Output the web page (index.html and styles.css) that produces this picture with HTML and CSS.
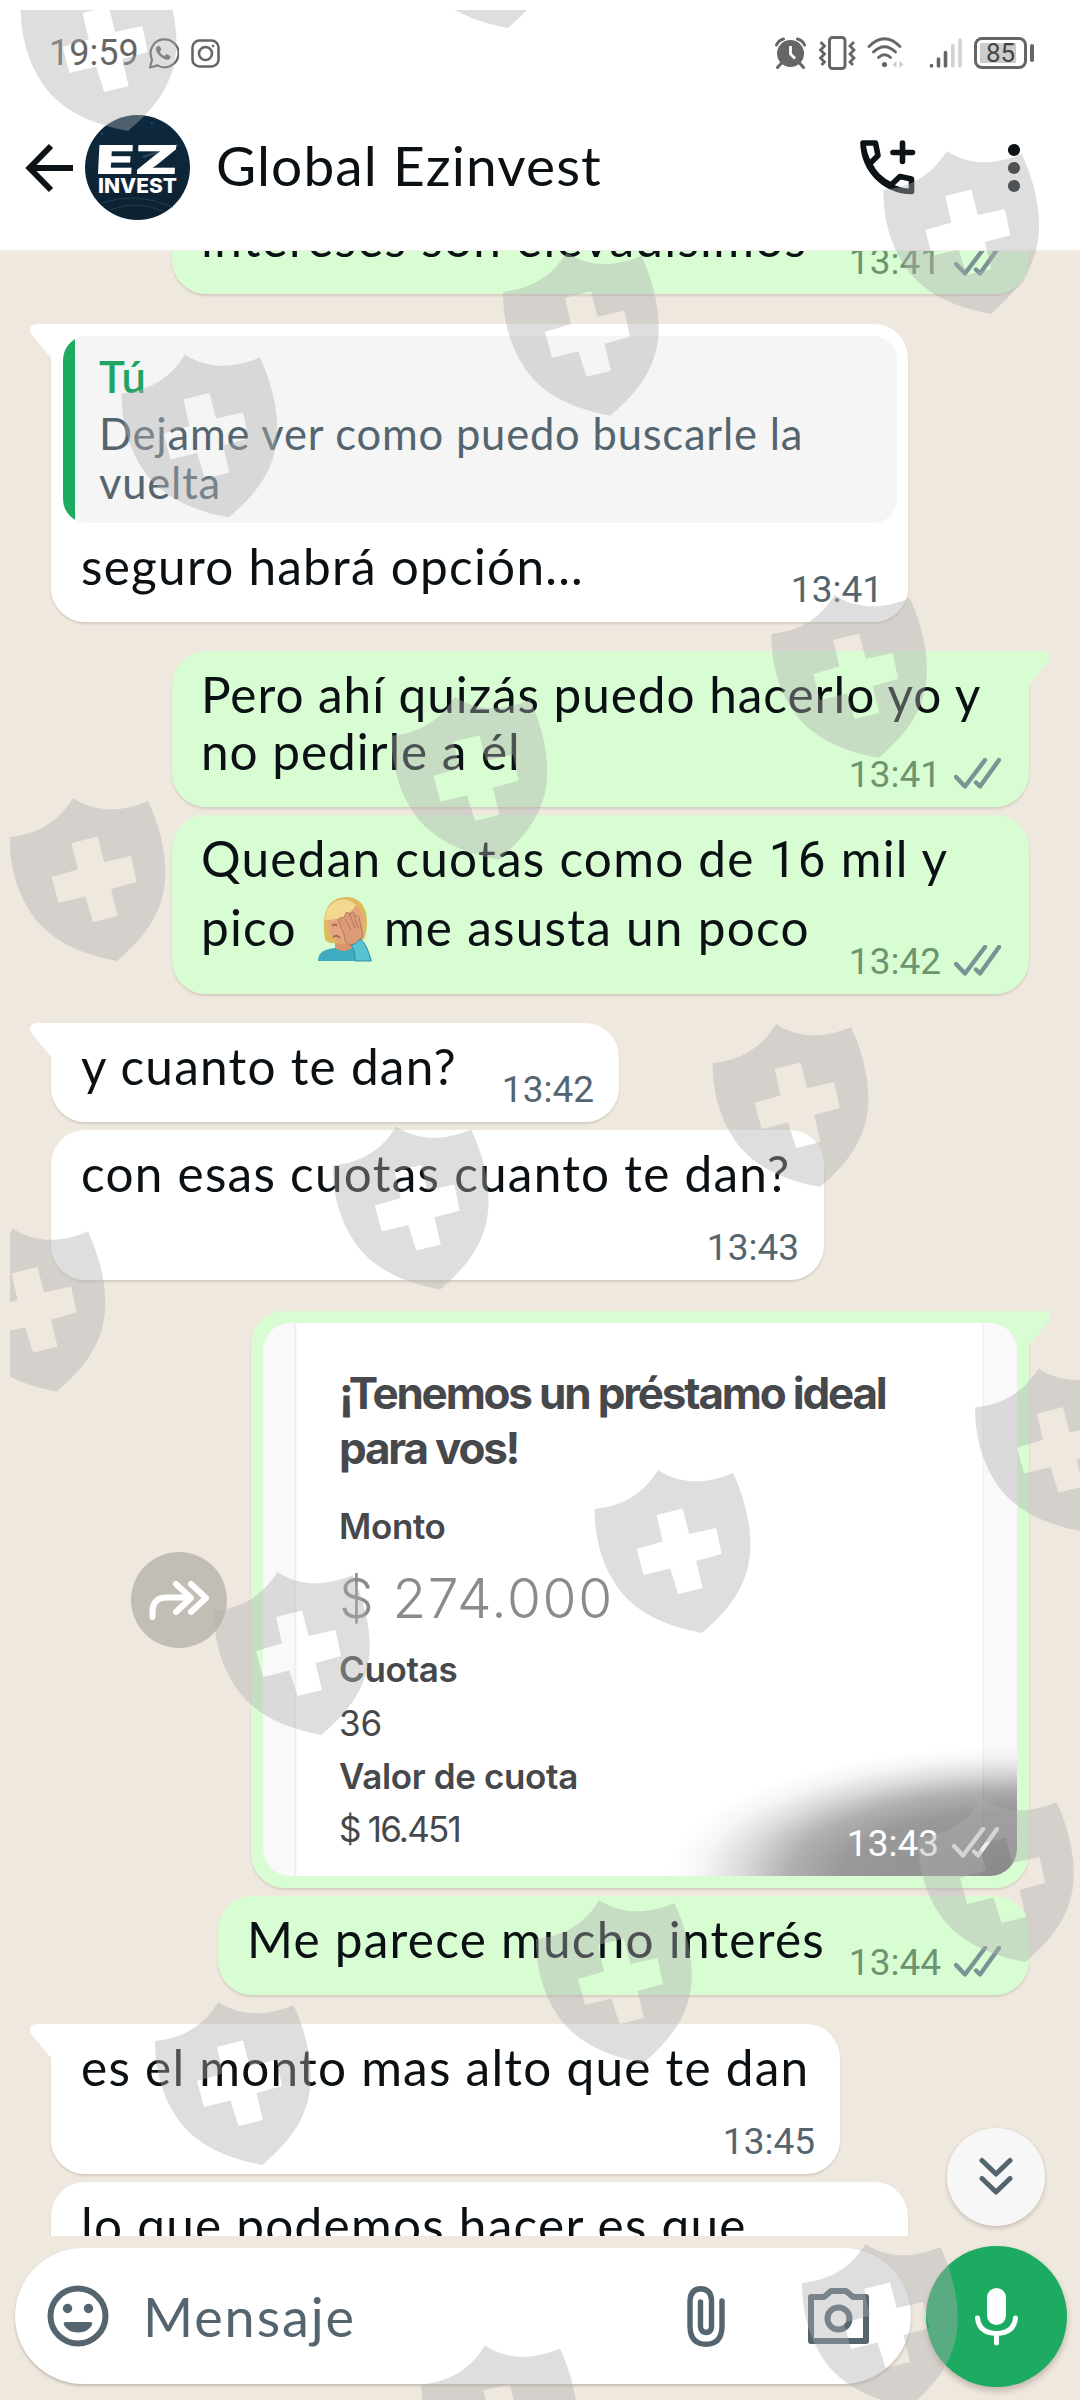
FILE: index.html
```html
<!DOCTYPE html>
<html lang="es">
<head>
<meta charset="utf-8">
<title>Global Ezinvest</title>
<link rel="stylesheet" href="styles.css">
</head>
<body>
<svg class="defs" width="0" height="0" aria-hidden="true">
  <defs>
    <symbol id="ticks" viewBox="0 0 47 31"><path d="M2 19 11 28.500 31 2M22 24.500 26 28.500 45 2" fill="none" stroke="currentColor" stroke-width="4.400" stroke-linecap="round" stroke-linejoin="round"/></symbol>
    <path id="shield" fill-rule="evenodd" d="M0 39C30 36 50 22 63.400 0C85 14 110 15 138.400 3C153 34 160 70 153 98C146 126 128 145 107.400 163C70 156 40 142 22 116C6 92 0 66 0 39ZM62 45 88 38.500 94.500 64 121.500 58 127 84 101.500 91 108 118 83.500 124 75.500 98.500 49 105 42 79 68 71.500Z"/>
  </defs>
</svg>
<div class="phone">
  <header class="header">
    <div class="status">
      <span class="clock">19:59</span>
      <svg class="ic-wa" width="31" height="32" viewBox="0 0 31 32" fill="none" stroke="#666" stroke-width="2.200"><path d="M2 30.500 4 22.500A14 14 0 1 1 9.500 28.400Z" stroke-linejoin="round"/><path d="M9 9.500c-2 2-1 6 3 9.500s8 5 10 2.500l.5-2.500-4-2-2 2c-2-.5-4-2.500-4.700-4.500l1.700-2-1.700-3.500Z" fill="#666" stroke="none"/></svg>
      <svg class="ic-ig" width="29" height="29" viewBox="0 0 29 29" fill="none" stroke="#666" stroke-width="2.600"><rect x="1.500" y="1.500" width="26" height="26" rx="7"/><circle cx="14.500" cy="14.500" r="6.500"/><circle cx="22" cy="7" r="1" fill="#666" stroke-width="1"/></svg>
      <div class="indicators">
        <svg width="31" height="32" viewBox="0 0 31 32"><circle cx="15.500" cy="16.500" r="13.500" fill="#666"/><path d="M1.500 8A10 10 0 0 1 8.500 2M29.500 8A10 10 0 0 0 22.500 2" stroke="#666" stroke-width="3" fill="none" stroke-linecap="round"/><path d="m6.500 26-4 4.500M24.500 26l4 4.500" stroke="#666" stroke-width="3" stroke-linecap="round"/><path d="M15.500 9v8l4.500 4.500" stroke="#fff" stroke-width="2.800" fill="none"/></svg>
        <svg class="g13" width="37" height="34" viewBox="0 0 37 34" fill="none" stroke="#666"><rect x="10.500" y="1.500" width="15.500" height="31" rx="3" stroke-width="3"/><path d="m1.500 6 4 4-4 4 4 4-4 4 4 4-3 3M35 6l-4 4 4 4-4 4 4 4-4 4 3 3" stroke-width="2.800"/></svg>
        <svg class="g11" width="38" height="32" viewBox="0 0 38 32" fill="none" stroke="#666" stroke-width="2.800" stroke-linecap="round"><path d="M2 9.500Q17.500-6 33 9.500M6.500 15Q17.500 4.500 28.500 15M11.500 20.500Q17.500 15 23.500 20.500"/><circle cx="17.500" cy="27.500" r="2.600" fill="#666" stroke="none"/><path d="m29.500 24-4 3.500 4 3.500ZM32.500 24l4 3.500-4 3.500Z" fill="#ccc" stroke="none"/></svg>
        <svg class="g25" width="34" height="32" viewBox="0 0 34 32" stroke-width="3.600" stroke-linecap="round"><path d="M2.500 28.500v.5M9.500 22v7M16.500 15.500V29" stroke="#666"/><path d="M23.800 8.500V29M31 3v26" stroke="#d2d2d2"/></svg>
        <span class="battery"><span class="charge">85</span></span><i class="nub"></i>
      </div>
    </div>
    <div class="appbar">
      <svg class="back" width="50" height="50" viewBox="0 0 50 50" fill="none" stroke="#0c1317" stroke-width="6"><path d="M26 3 4.500 25 26 47M4.500 25H48"/></svg>
      <svg class="avatar" width="105" height="105" viewBox="0 0 105 105"><defs><linearGradient id="av" x1="0" y1="0" x2="0" y2="1"><stop offset="0" stop-color="#0d2a40"/><stop offset="1" stop-color="#0d2130"/></linearGradient></defs><circle cx="52.500" cy="52.500" r="52.500" fill="url(#av)"/><path d="M17 88Q50 76 88 92M25 95Q52 84 80 97" stroke="#263c4b" fill="none"/><path d="M16 19h2M66 8h2M91 30h2M58 42l34-11" stroke="#365369" stroke-width="1.500"/><g fill="#fff" font-family="Inter, sans-serif"><text x="10" y="59" font-size="40" font-weight="900" textLength="83" lengthAdjust="spacingAndGlyphs" transform="translate(3 0) skewX(-3)">EZ</text><text x="13" y="77.500" font-size="20" font-weight="800" textLength="79" lengthAdjust="spacingAndGlyphs">INVEST</text></g></svg>
      <h1 class="title">Global Ezinvest</h1>
      <svg class="call" width="56" height="56" viewBox="0 0 56 56" fill="none" stroke="#0c1317" stroke-width="5.600" stroke-linejoin="round" stroke-linecap="round"><path d="M9.500 24C5 17 3.500 10 3 3H15.500L18 15.500 9.500 24ZM9.500 24C14 34 22 41 31 45L40 36.500 51.500 39V51.500C25 51 4 31 3 3"/><path d="M42.500 3v18.500M33 12.500h19.500"/></svg>
      <svg class="more" width="14" height="50" viewBox="0 0 14 50" fill="#0c1317"><circle cx="7" cy="7" r="6.100"/><circle cx="7" cy="25" r="6.100"/><circle cx="7" cy="43" r="6.100"/></svg>
    </div>
  </header>

  <main class="chat">
    <div class="bubble out first w857"><p class="text">intereses son elevadísimos</p><div class="meta"><time>13:41</time><svg class="ticks"><use href="#ticks"/></svg></div></div>

    <div class="bubble in tail lead reply w857">
      <blockquote class="quote"><b>Tú</b><p>Dejame ver como puedo buscarle la<br>vuelta</p></blockquote>
      <p class="text">seguro habrá opción...</p><div class="meta"><time>13:41</time></div>
    </div>

    <div class="bubble out tail lead w857"><p class="text snug">Pero ahí quizás puedo hacerlo yo y<br>no pedirle a él</p><div class="meta"><time>13:41</time><svg class="ticks"><use href="#ticks"/></svg></div></div>
    <div class="bubble out w857"><p class="text">Quedan cuotas como de <span class="num">16</span> mil y</p><p class="text emoji-line"><span>pico</span><svg class="emoji" width="56" height="66" viewBox="0 0 56 66"><path d="M1 65C1 56 8 53 18 52L34 51C46 53 53 56 55 65Z" fill="#3fabc0"/><path d="M18 43h17v9q-8 6-17 0Z" fill="#d99569"/><path d="M8 43C5 25 6 2 29 1c20 0 24 20 19 40q-3 6-12 7l-22-1q-5-1-6-4Z" fill="#dfb95e"/><path d="M11 23Q30 22 39 10q8 5 7 19c-1 13-9 19-18 19S10 39 11 23Z" fill="#e4a67f"/><path d="M8 24C9 4 27-2 39 9 33 20 22 24 8 24Z" fill="#f4d890"/><path d="M15 30q3-3 5 0M16 41q4-3 7 1" stroke="#a56b4b" stroke-width="2" fill="none"/><path d="M22 27 27 38 28 45Q34 53 41 47 48 42 44 31L42 21Q39 17 38 22L37 17Q34 14 33 19L32 17Q28 15 28 20L26 22Q21 20 22 27Z" fill="#db9b76" stroke="#b97858" stroke-width="1"/><path d="m28 23 6 11M33 19l5 13M38 23l3 9" stroke="#b97858" fill="none"/><path d="M34 49Q39 49 43 43 50 47 54 65H38Q39 55 34 49Z" fill="#59c3d4" stroke="#3091a6" stroke-width="1"/></svg><span>me asusta un poco</span></p><div class="meta"><time>13:42</time><svg class="ticks"><use href="#ticks"/></svg></div></div>

    <div class="bubble in tail lead w568"><p class="text">y cuanto te dan?</p><div class="meta"><time>13:42</time></div></div>
    <div class="bubble in below w773"><p class="text">con esas cuotas cuanto te dan?</p><div class="meta"><time>13:43</time></div></div>

    <div class="media-row">
      <button class="forward" aria-label="Reenviar"><svg width="60" height="40" viewBox="0 0 60 40" fill="none" stroke="#fff" stroke-width="6" stroke-linecap="round" stroke-linejoin="round"><path d="M3.500 37V32Q3.500 17.500 18 17.500H41M27 4 42 18 27 32M42 4 57 18 42 32"/></svg></button>
      <div class="bubble out tail photo-bubble">
        <div class="photo">
          <div class="offer">
            <h2>¡Tenemos un préstamo ideal<br>para vos!</h2>
            <strong class="monto">Monto</strong>
            <span class="amount">$ 274.000</span>
            <strong class="cuotas">Cuotas</strong>
            <span class="count">36</span>
            <strong class="valor">Valor de cuota</strong>
            <span class="fee">$ 16.451</span>
          </div>
          <div class="meta light"><time>13:43</time><svg class="ticks"><use href="#ticks"/></svg></div>
        </div>
      </div>
    </div>
    <div class="bubble out w811"><p class="text">Me parece mucho interés</p><div class="meta"><time>13:44</time><svg class="ticks"><use href="#ticks"/></svg></div></div>

    <div class="bubble in tail lead below w789"><p class="text">es el monto mas alto que te dan</p><div class="meta"><time>13:45</time></div></div>
    <div class="bubble in w857"><p class="text">lo que podemos hacer es que</p><div class="meta"></div></div>
  </main>

  <footer class="composer">
    <div class="field">
      <svg class="smile" width="62" height="62" viewBox="0 0 62 62" fill="none" stroke="#54656f"><circle cx="31" cy="31" r="27.500" stroke-width="6"/><g fill="#54656f" stroke="none"><circle cx="20.500" cy="23.500" r="4.700"/><circle cx="41.500" cy="23.500" r="4.700"/><path d="M19 37H43Q46 37 45 40 41 47.500 31 47.500T17 40Q16 37 19 37Z"/></g></svg>
      <span class="placeholder">Mensaje</span>
      <svg class="clip" width="38" height="61" viewBox="0 0 38 61" fill="none" stroke="#54656f" stroke-width="5.400" stroke-linecap="round"><path d="M35 15V41Q34.500 58 19 58.300 3.500 58 3 41V15Q3.500 3 13.700 2.700 24 3 24.500 14V41Q24 46.500 19 46.500 14 46 13.500 41V16"/></svg>
      <svg class="camera" width="61" height="56" viewBox="0 0 61 56" fill="none" stroke="#54656f" stroke-width="6" stroke-linejoin="round"><path d="M3 9H16L23 3H38L45 9H58V53H3Z"/><circle cx="30.500" cy="30.500" r="11"/></svg>
    </div>
    <button class="mic" aria-label="Grabar"><svg width="43" height="60" viewBox="0 0 43 60" fill="none" stroke="#fff" stroke-width="5" stroke-linecap="round"><rect x="12" y="1" width="19" height="37" rx="9.500" fill="#fff" stroke="none"/><path d="M2.500 31Q4 46 21.500 46.500 39 46 40.500 31M21.500 47v9"/></svg></button>
  </footer>

  <button class="to-end" aria-label="Ir al final"><svg width="34" height="40" viewBox="0 0 34 40" fill="none" stroke="#54656f" stroke-width="5" stroke-linecap="round" stroke-linejoin="round"><path d="m3 3.500 14 13.500L31 3.500M3 21.500 17 35 31 21.500"/></svg></button>

  <svg class="marks" width="1070" height="2390" viewBox="10 10 1070 2390" fill="#b0b0b0" fill-opacity=".41" aria-hidden="true">
    <use href="#shield" x="20.700" y="-32"/><use href="#shield" x="400.500" y="-135"/><use href="#shield" x="883.300" y="151"/>
    <use href="#shield" x="503" y="252.700"/><use href="#shield" x="121.500" y="354.500"/><use href="#shield" x="771.200" y="595"/>
    <use href="#shield" x="391.500" y="696.700"/><use href="#shield" x="9.600" y="798"/><use href="#shield" x="712.600" y="1024"/>
    <use href="#shield" x="332.800" y="1126.500"/><use href="#shield" x="-50.500" y="1228.500"/><use href="#shield" x="594.600" y="1470"/>
    <use href="#shield" x="975" y="1368.500"/><use href="#shield" x="214" y="1572"/><use href="#shield" x="918" y="1799"/>
    <use href="#shield" x="536" y="1900"/><use href="#shield" x="155" y="2002"/><use href="#shield" x="802" y="2244"/>
    <use href="#shield" x="421.500" y="2345.500"/>
  </svg>
</div>
</body>
</html>
```
FILE: styles.css
```css
* { box-sizing: border-box; }
body { margin: 0; }
p, h1, h2, blockquote { margin: 0; }
button { border: 0; padding: 0; display: flex; align-items: center; justify-content: center; border-radius: 50%; }
svg { flex: none; display: block; }
.defs { position: absolute; }

.phone {
  position: relative;
  width: 1080px;
  height: 2400px;
  overflow: hidden;
  display: flex;
  flex-direction: column;
  background: #efe8df;
  font-family: Lato, "Noto Sans", sans-serif;
  color: #0a1014;
}

/* header */
.header { height: 251px; flex: none; background: #fff; border-bottom: 1px solid #f3efea; }
.status { height: 106px; display: flex; align-items: center; padding-left: 49px; padding-right: 46px; }
.clock { font: 400 36px/40px Roboto, sans-serif; color: #666; width: 99px; }
.ic-ig { margin-left: 12px; }
.indicators { margin-left: auto; display: flex; align-items: center; }
.g13 { margin-left: 13px; }
.g11 { margin-left: 11px; }
.g25 { margin-left: 24px; }
.battery { margin-left: 11px; width: 53px; height: 32px; border: 3px solid #666; border-radius: 8px; padding: 3px; display: flex; }
.charge { flex: 1; display: flex; align-items: center; justify-content: center; background: linear-gradient(90deg, #ccc 88%, #fff 88%); font: 400 26px/20px Roboto, sans-serif; color: #444; }
.nub { width: 4px; height: 18px; margin-left: 3px; border-radius: 2px; background: #666; }

.appbar { height: 144px; padding: 0 59px 21px 25px; display: flex; align-items: center; }
.avatar { margin-left: 10px; }
.title { margin-left: 26px; padding-bottom: 6px; font-size: 55px; line-height: 66px; font-weight: 400; letter-spacing: 1.1px; white-space: nowrap; }
.call { margin-left: auto; }
.more { margin-left: 91px; }

/* conversation */
.chat { height: 1985px; flex: none; overflow: hidden; padding: 0 51px; display: flex; flex-direction: column; }
.bubble {
  position: relative;
  flex: none;
  display: flex;
  flex-direction: column;
  margin-top: 8px;
  padding: 15px 25px 12px 30px;
  border-radius: 34px;
  box-shadow: 0 2px 2px rgba(90, 70, 50, .16);
}
.in { align-self: flex-start; background: #fff; }
.out { align-self: flex-end; background: #d8fdd2; padding-left: 29px; padding-right: 27px; }
.lead { margin-top: 29px; }
.first { margin-top: -56px; }
.w568 { width: 568px; }
.w773 { width: 773px; }
.w789 { width: 789px; }
.w811 { width: 811px; }
.w857 { width: 857px; }

.in.tail { border-top-left-radius: 0; }
.out.tail { border-top-right-radius: 0; }
.tail::before {
  content: "";
  position: absolute;
  top: 0;
  width: 22px;
  height: 36px;
  background: inherit;
}
.in.tail::before { left: -21px; clip-path: path("M22 0H7Q0 0 0 6Q0 9 3 12L22 35Z"); }
.out.tail::before { right: -21px; clip-path: path("M0 0H15Q22 0 22 6Q22 9 19 12L0 35Z"); }

.text { font-size: 49.500px; line-height: 57px; letter-spacing: 1.25px; white-space: nowrap; }
.snug { letter-spacing: .95px; }
.num { font-family: Roboto, sans-serif; line-height: 1; }
.emoji-line { display: flex; padding-top: 12px; padding-bottom: 11px; }
.emoji { margin: -3px 11px -6px 20px; }
.meta {
  align-self: flex-end;
  height: 40px;
  margin-top: -25px;
  display: flex;
  gap: 14px;
  font: 400 37px/40px Roboto, sans-serif;
  color: #54656f;
}
.out .meta { color: #6d9470; }
.ticks { width: 47px; height: 31px; margin-top: 3px; color: #7b9394; }
.out .ticks { margin-right: 1px; margin-left: -1px; }
.below .meta { margin-top: 26px; }

.reply { margin-top: 30px; }
.quote {
  height: 187px;
  margin: -3px -14px 0 -18px;
  padding: 16px 0 0 36px;
  border-radius: 24px;
  background: linear-gradient(90deg, #1dab61 12px, #f5f5f5 12px);
  color: #54656f;
  font-size: 43.500px;
  line-height: 49px;
  letter-spacing: .8px;
  white-space: nowrap;
}
.quote b { display: block; margin-bottom: 8px; color: #1fa463; font-weight: 600; }
.quote + .text { margin-top: 15px; }

/* shared loan offer */
.media-row { flex: none; display: flex; justify-content: space-between; align-items: center; margin-top: 31px; padding-left: 80px; }
.forward { width: 96px; height: 96px; background: #c2beb6; }
.photo-bubble { width: 778px; height: 577px; margin-top: 0; padding: 12px; }
.photo {
  height: 554px;
  border-radius: 27px;
  overflow: hidden;
  display: grid;
  background:
    radial-gradient(ellipse 350px 130px at 100% 100%, rgba(0,0,0,.45) 0, rgba(0,0,0,.4) 50%, rgba(0,0,0,.31) 65%, rgba(0,0,0,.14) 79%, rgba(0,0,0,.04) 90%, transparent 100%),
    linear-gradient(90deg, #f9f9f9 31px, #e9e9e9 32px, #fff 34px, #fff 719px, #eee 720px, #f9f9f9 722px);
}
.photo > * { grid-area: 1 / 1; }
.offer { display: flex; flex-direction: column; padding: 43px 0 0 76px; font: 400 35px/53.300px Inter, sans-serif; color: #46484b; white-space: nowrap; }
.offer h2 { font-size: 44px; line-height: 55px; font-weight: 700; letter-spacing: -2.2px; margin-bottom: 24px; }
.offer strong { font-weight: 600; letter-spacing: -.35px; }
.offer .amount { font-size: 55px; line-height: 90px; font-weight: 300; letter-spacing: 1.6px; color: #8b8b8b; }
.offer .fee { letter-spacing: -1.8px; }
.photo .light { align-self: end; justify-self: end; margin: 0 17px 12px 0; color: #fff; }
.light .ticks { color: #eee; }

/* composer */
.composer { flex: none; display: flex; gap: 15px; padding: 12px 13px 0 15px; }
.field { width: 896px; height: 136px; border-radius: 68px; background: #fff; display: flex; align-items: center; padding: 0 42px 0 32px; box-shadow: 0 2px 3px rgba(90, 70, 50, .28); }
.placeholder { margin-left: 34px; font-size: 54px; letter-spacing: 1.9px; color: #54656f; }
.clip { margin-left: auto; }
.camera { margin-left: 83px; }
.mic { width: 141px; height: 141px; margin-top: -2px; background: #1dab61; box-shadow: 0 4px 6px rgba(60, 40, 20, .25); }
.to-end { position: absolute; left: 947px; top: 2128px; width: 98px; height: 98px; background: #f7f7f7; box-shadow: 0 2px 4px rgba(60, 40, 20, .22); }
.marks { position: absolute; left: 10px; top: 10px; pointer-events: none; }
```
